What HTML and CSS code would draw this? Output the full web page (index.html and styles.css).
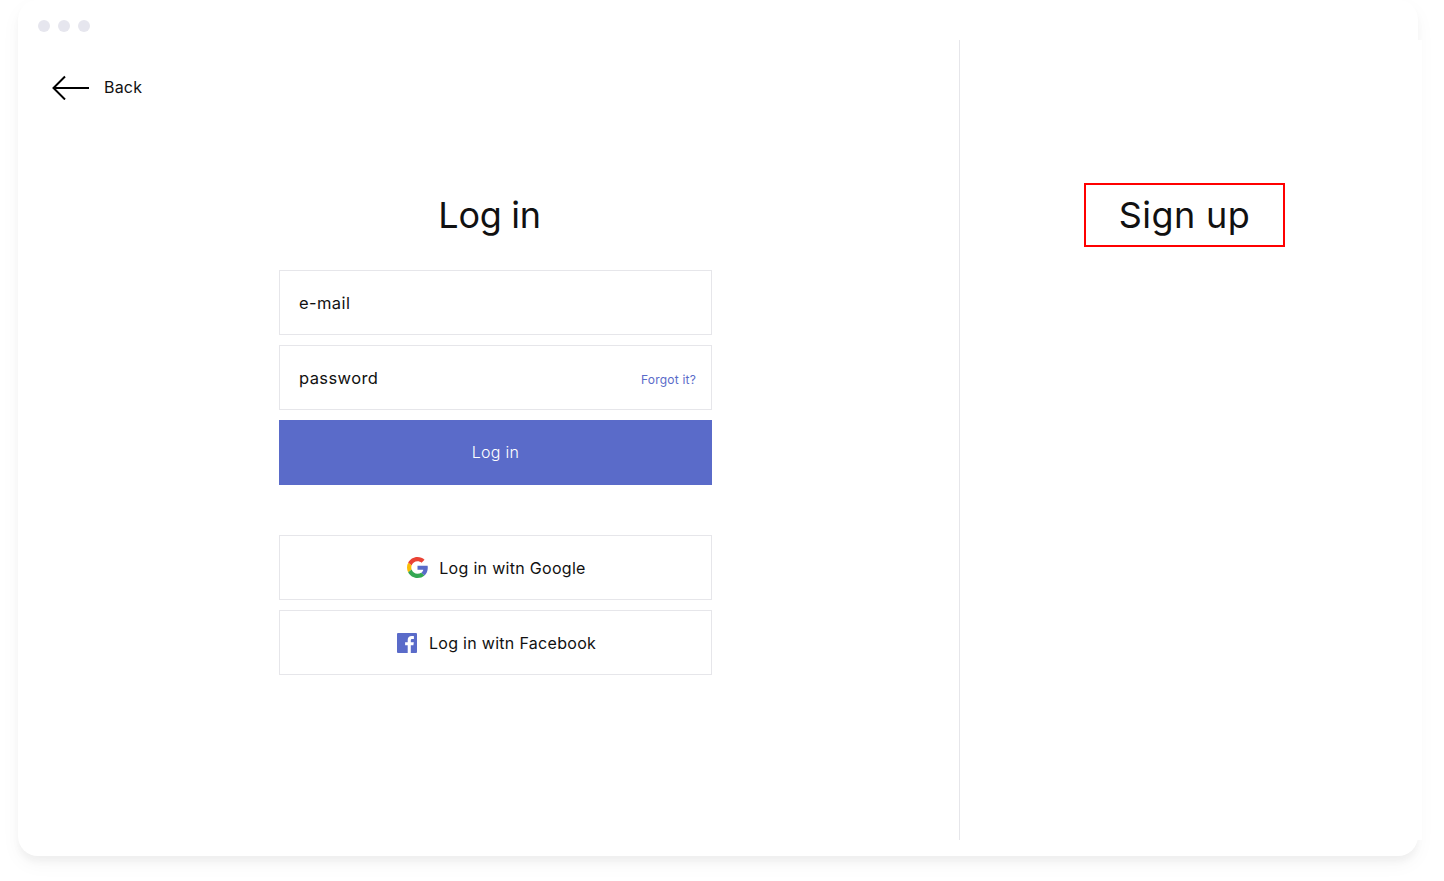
FILE: index.html
```html
<!DOCTYPE html>
<html lang="en">
<head>
    <meta charset="UTF-8">
    <meta name="viewport" content="width=device-width, initial-scale=1.0">
    <title>Log in</title>
    <link rel="stylesheet" href="styles.css">
</head>
<body>
    <div class="window">
        <!-- Login side -->
        <div class="login-side">
            <div class="dots">
                <span class="dot"></span>
                <span class="dot"></span>
                <span class="dot"></span>
            </div>
            <a class="back" href="#">
                <svg width="37" height="26" viewBox="0 0 37 26" fill="none" stroke="#000" stroke-width="2">
                    <path d="M37 14H2"/>
                    <path d="M13 2.500L1.500 14L13 25.500"/>
                </svg>
                <span>Back</span>
            </a>
            <h1 class="title">Log in</h1>
            <div class="form">
                <div class="field">e-mail</div>
                <div class="field field-password">
                    <span>password</span>
                    <a class="forgot" href="#">Forgot it?</a>
                </div>
                <button class="submit-btn">Log in</button>
                <button class="social-btn social-first">
                    <svg width="21" height="21" viewBox="0 0 48 48">
                        <path fill="#ea4335" d="M24 9.500c3.500 0 6.700 1.300 9.200 3.400l6.900-6.900C35.900 2.200 30.300 0 24 0 14.600 0 6.500 5.400 2.600 13.200l8 6.200C12.500 13.600 17.800 9.500 24 9.500z"/>
                        <path fill="#5a6bc9" d="M47.500 24.500c0-1.600-.2-3.200-.4-4.500H24v9.100h13.200c-.6 3-2.300 5.500-4.800 7.200l7.700 6c4.500-4.200 7.400-10.400 7.400-17.800z"/>
                        <path fill="#fbbc05" d="M10.600 28.600c-.5-1.500-.8-3-.8-4.600s.3-3.100.8-4.600l-8-6.200C.9 16.500 0 20.100 0 24s.9 7.500 2.600 10.800l8-6.200z"/>
                        <path fill="#34a853" d="M24 48c6.500 0 11.900-2.100 15.900-5.800l-7.700-6c-2.200 1.400-4.900 2.300-8.200 2.300-6.200 0-11.500-4.100-13.400-9.900l-8 6.200C6.500 42.600 14.600 48 24 48z"/>
                    </svg>
                    <span>Log in witn Google</span>
                </button>
                <button class="social-btn social-fb">
                    <svg width="20" height="20" viewBox="0 0 20 20">
                        <rect width="20" height="20" rx="1" fill="#5a6bc9"/>
                        <path fill="#fff" d="M13.800 20v-7.700h2.600l.4-3h-3V7.400c0-.9.200-1.500 1.500-1.500h1.600V3.200c-.3 0-1.200-.1-2.300-.1-2.300 0-3.900 1.400-3.900 4v2.200H8.100v3h2.600V20z"/>
                    </svg>
                    <span>Log in witn Facebook</span>
                </button>
            </div>
        </div>

        <!-- Sign up side -->
        <div class="signup-side">
            <div class="signup-box">Sign up</div>
        </div>
    </div>
</body>
</html>
```

FILE: styles.css
```css
* { margin: 0; padding: 0; box-sizing: border-box; }

body {
    font-family: Inter, Arial, sans-serif;
    background: #fff;
    color: #111;
    min-height: 100vh;
    padding-left: 18px;
}

.window {
    display: flex;
    width: 1400px;
    height: 856px;
    background: #fff;
    border-radius: 20px;
    box-shadow: 0 6px 6px rgba(0,0,0,0.035), 0 8px 20px rgba(0,0,0,0.04);
}

.login-side {
    flex: 0 0 941px;
    padding-top: 20px;
}

.dots {
    display: flex;
    gap: 8px;
    padding-left: 20px;
}

.dot {
    width: 12px;
    height: 12px;
    border-radius: 50%;
    background: #e6e6ee;
}

.back {
    display: flex;
    align-items: center;
    gap: 15px;
    margin: 42px 0 0 34px;
    color: #111;
    font-size: 16px;
    letter-spacing: 0.2px;
    text-decoration: none;
}

.title {
    margin-top: 83px;
    padding-left: 2px;
    font-size: 36px;
    font-weight: 400;
    letter-spacing: -0.3px;
    line-height: 64px;
    text-align: center;
}

.form {
    display: flex;
    flex-direction: column;
    gap: 10px;
    width: 433px;
    margin: 23px 0 0 261px;
}

.field, .social-btn {
    height: 65px;
    border: 1px solid #e6e6ea;
    background: #fff;
}

.field {
    display: flex;
    align-items: center;
    justify-content: space-between;
    padding: 0 15px 0 19px;
    font-size: 16.500px;
    letter-spacing: 0.4px;
}

.forgot {
    margin-top: 4px;
    color: #5a6bc9;
    font-size: 12px;
    letter-spacing: 0.2px;
    text-decoration: none;
}

button {
    font-family: inherit;
    color: #111;
}

.submit-btn {
    height: 65px;
    padding-bottom: 2px;
    border: none;
    background: #5a6bc9;
    color: #fff;
    font-size: 16px;
    font-weight: 300;
    letter-spacing: 0.3px;
}

.social-btn {
    display: flex;
    align-items: center;
    justify-content: center;
    gap: 11px;
    padding-left: 2px;
    font-size: 16px;
    letter-spacing: 0.3px;
}

.social-first { margin-top: 40px; }
.social-fb { gap: 12px; }

.signup-side {
    flex: 0 0 463px;
    margin: 40px 0 16px;
    padding: 143px 0 0 124px;
    background: #fff;
    border-left: 1px solid #e6e6ea;
}

.signup-box {
    width: 201px;
    height: 64px;
    border: 2px solid #f00;
    font-size: 36px;
    letter-spacing: 0.4px;
    line-height: 60px;
    text-align: center;
}
```
